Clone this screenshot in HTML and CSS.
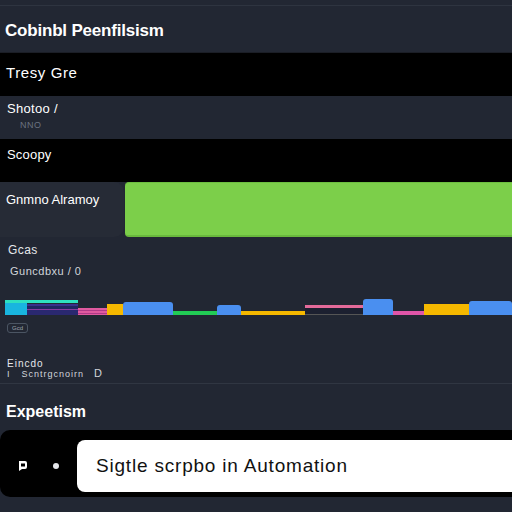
FILE: index.html
```html
<!DOCTYPE html>
<html>
<head>
<meta charset="utf-8">
<link rel="stylesheet" href="styles.css">
</head>
<body>
<div class="page">
  <header class="title-bar"><h1 class="title">Cobinbl Peenfilsism</h1></header>
  <div class="band band-a"><span class="band-text">Tresy Gre</span></div>
  <div class="sub">
    <div class="sub-title">Shotoo /</div>
    <div class="sub-meta">NNO</div>
  </div>
  <div class="band band-b"><span class="band-text small">Scoopy</span></div>
  <div class="split">
    <div class="split-left"><span>Gnmno Alramoy</span></div>
    <div class="split-right"></div>
  </div>
  <section class="timeline-sec">
    <div class="t-label">Gcas</div>
    <div class="t-sub">Guncdbxu / 0</div>
    <div class="track">
      <div class="seg seg-cyan" style="width:22px;height:14px"></div>
      <div class="seg seg-navy" style="width:51px;height:11px"></div>
      <div class="seg seg-pink-striped" style="width:29px;height:7px"></div>
      <div class="seg seg-yellow" style="width:16px;height:11px"></div>
      <div class="seg seg-blue" style="width:50px;height:13px"></div>
      <div class="seg seg-green" style="width:44px;height:4px"></div>
      <div class="seg seg-blue" style="width:24px;height:10px"></div>
      <div class="seg seg-yellow" style="width:64px;height:4px"></div>
      <div class="seg seg-dash" style="width:58px;height:10px"></div>
      <div class="seg seg-blue" style="width:30px;height:16px"></div>
      <div class="seg seg-pink" style="width:31px;height:4px"></div>
      <div class="seg seg-yellow" style="width:45px;height:11px"></div>
      <div class="seg seg-blue" style="width:43px;height:14px"></div>
      <div class="teal-cap"></div>
    </div>
    <div class="badge">Gcd</div>
    <div class="foot">
      <div class="foot-a">Eincdo</div>
      <div class="foot-b"><span>I</span><span class="foot-mid">Scntrgcnoirn</span><span class="foot-d">D</span></div>
    </div>
  </section>
  <section class="bottom">
    <h2 class="bottom-title">Expeetism</h2>
    <div class="composer">
      <div class="icons">
        <svg width="10" height="11" viewBox="0 0 10 11"><path d="M1 1h6a2 2 0 0 1 2 2v4a2 2 0 0 1-2 2H4l-3 2z" fill="#fff"/><rect x="3" y="3.5" width="4" height="3" fill="#000"/></svg>
        <span class="dot"></span>
      </div>
      <div class="input">Sigtle scrpbo in Automation</div>
    </div>
  </section>
</div>
</body>
</html>
```

FILE: styles.css
```css
* { box-sizing: border-box; }
html, body { margin: 0; padding: 0; }
body {
  width: 512px;
  height: 512px;
  overflow: hidden;
  background: #222733;
  font-family: "Liberation Sans", Arial, sans-serif;
  color: #fff;
}
.page { display: flex; flex-direction: column; }
.title-bar {
  border-top: 1px solid #2e3440;
  margin-top: 5px;
  display: flex;
  align-items: center;
  padding: 3px 0 0 5px;
  height: 47px;
}
.title { margin: 0; font-size: 17px; font-weight: bold; letter-spacing: -0.2px; }
.band {
  background: #000;
  display: flex;
  align-items: center;
  padding-left: 6px;
}
.band-a { height: 44px; border-top: 1px solid #1b1e26; padding-bottom: 4px; }
.band-text { font-size: 15px; letter-spacing: 0.6px; }
.band-text.small { font-size: 13px; letter-spacing: 0.2px; }
.band-b { height: 43px; padding-left: 7px; padding-bottom: 12px; }
.sub { height: 43px; padding: 5px 0 0 7px; }
.sub-title { font-size: 13px; line-height: 15px; letter-spacing: 0.3px; }
.sub-meta { font-size: 9px; color: #6b7280; padding-left: 13px; margin-top: 4px; letter-spacing: 0.5px; }
.split { display: flex; height: 55px; }
.split-left {
  width: 124px;
  background: #262b36;
  border-radius: 0 10px 10px 0;
  padding: 10px 0 0 6px;
  font-size: 13px;
}
.split-right {
  flex: 1;
  margin-left: 1px;
  background: #7ccf4a;
  border-top: 1px solid #6cbf3f;
  border-bottom: 2px solid #69b93d;
  border-radius: 4px 0 0 4px;
}
.timeline-sec { height: 147px; padding-top: 6px; border-bottom: 1px solid #303642; }
.t-label { font-size: 12px; color: #e5e7eb; padding-left: 8px; line-height: 14px; letter-spacing: 0.4px; }
.t-sub { font-size: 11px; color: #d1d5db; padding-left: 10px; margin-top: 8px; line-height: 13px; letter-spacing: 0.5px; }
.track {
  position: relative;
  display: flex;
  align-items: flex-end;
  height: 16px;
  margin-top: 21px;
  padding-left: 5px;
}
.seg { flex: none; }
.seg-cyan { background: #19b5df; }
.seg-navy { background: linear-gradient(#3a2f8c 0 2px, #1f2560 2px 5px, #8a3aa0 5px 6px, #2a2870 6px); }
.seg-pink-striped { background: repeating-linear-gradient(#e05aa0 0 2px, #b03a88 2px 3px); }
.seg-yellow { background: #f5b800; }
.seg-blue { background: #4a8ff0; border-radius: 3px 3px 0 0; }
.seg-green { background: #22cc55; }
.seg-pink { background: #e055a8; }
.seg-dash { background: #1c2030; border-top: 3px solid #e46a9a; border-bottom: 1px solid #555; }
.teal-cap { position: absolute; left: 5px; top: 1px; width: 73px; height: 3px; background: #2ee0c0; }
.badge {
  margin: 8px 0 0 7px;
  width: 21px;
  height: 10px;
  border: 1px solid #4b5563;
  border-radius: 3px;
  font-size: 6px;
  color: #9ca3af;
  text-align: center;
  line-height: 8px;
}
.foot { margin-top: 26px; padding-left: 7px; }
.foot-a { font-size: 10px; line-height: 9px; color: #e5e7eb; letter-spacing: 1px; }
.foot-b { font-size: 9px; color: #d1d5db; display: flex; align-items: baseline; line-height: 10px; letter-spacing: 1px; }
.foot-mid { margin-left: 11px; }
.foot-d { margin-left: 10px; font-size: 11px; }
.bottom { padding-top: 18px; }
.bottom-title { margin: 0 0 8px 6px; font-size: 16px; font-weight: bold; line-height: 20px; }
.composer {
  background: #000;
  height: 67px;
  border-radius: 10px 0 0 10px;
  display: flex;
  align-items: center;
  padding-top: 4px;
}
.icons { width: 77px; display: flex; align-items: center; padding-left: 18px; gap: 25px; }
.dot { width: 6px; height: 6px; border-radius: 50%; background: #e5e7eb; }
.input {
  flex: 1;
  height: 52px;
  background: #fff;
  border-radius: 8px 0 0 8px;
  color: #111;
  font-size: 19px;
  letter-spacing: 0.8px;
  display: flex;
  align-items: center;
  padding-left: 19px;
}
```
